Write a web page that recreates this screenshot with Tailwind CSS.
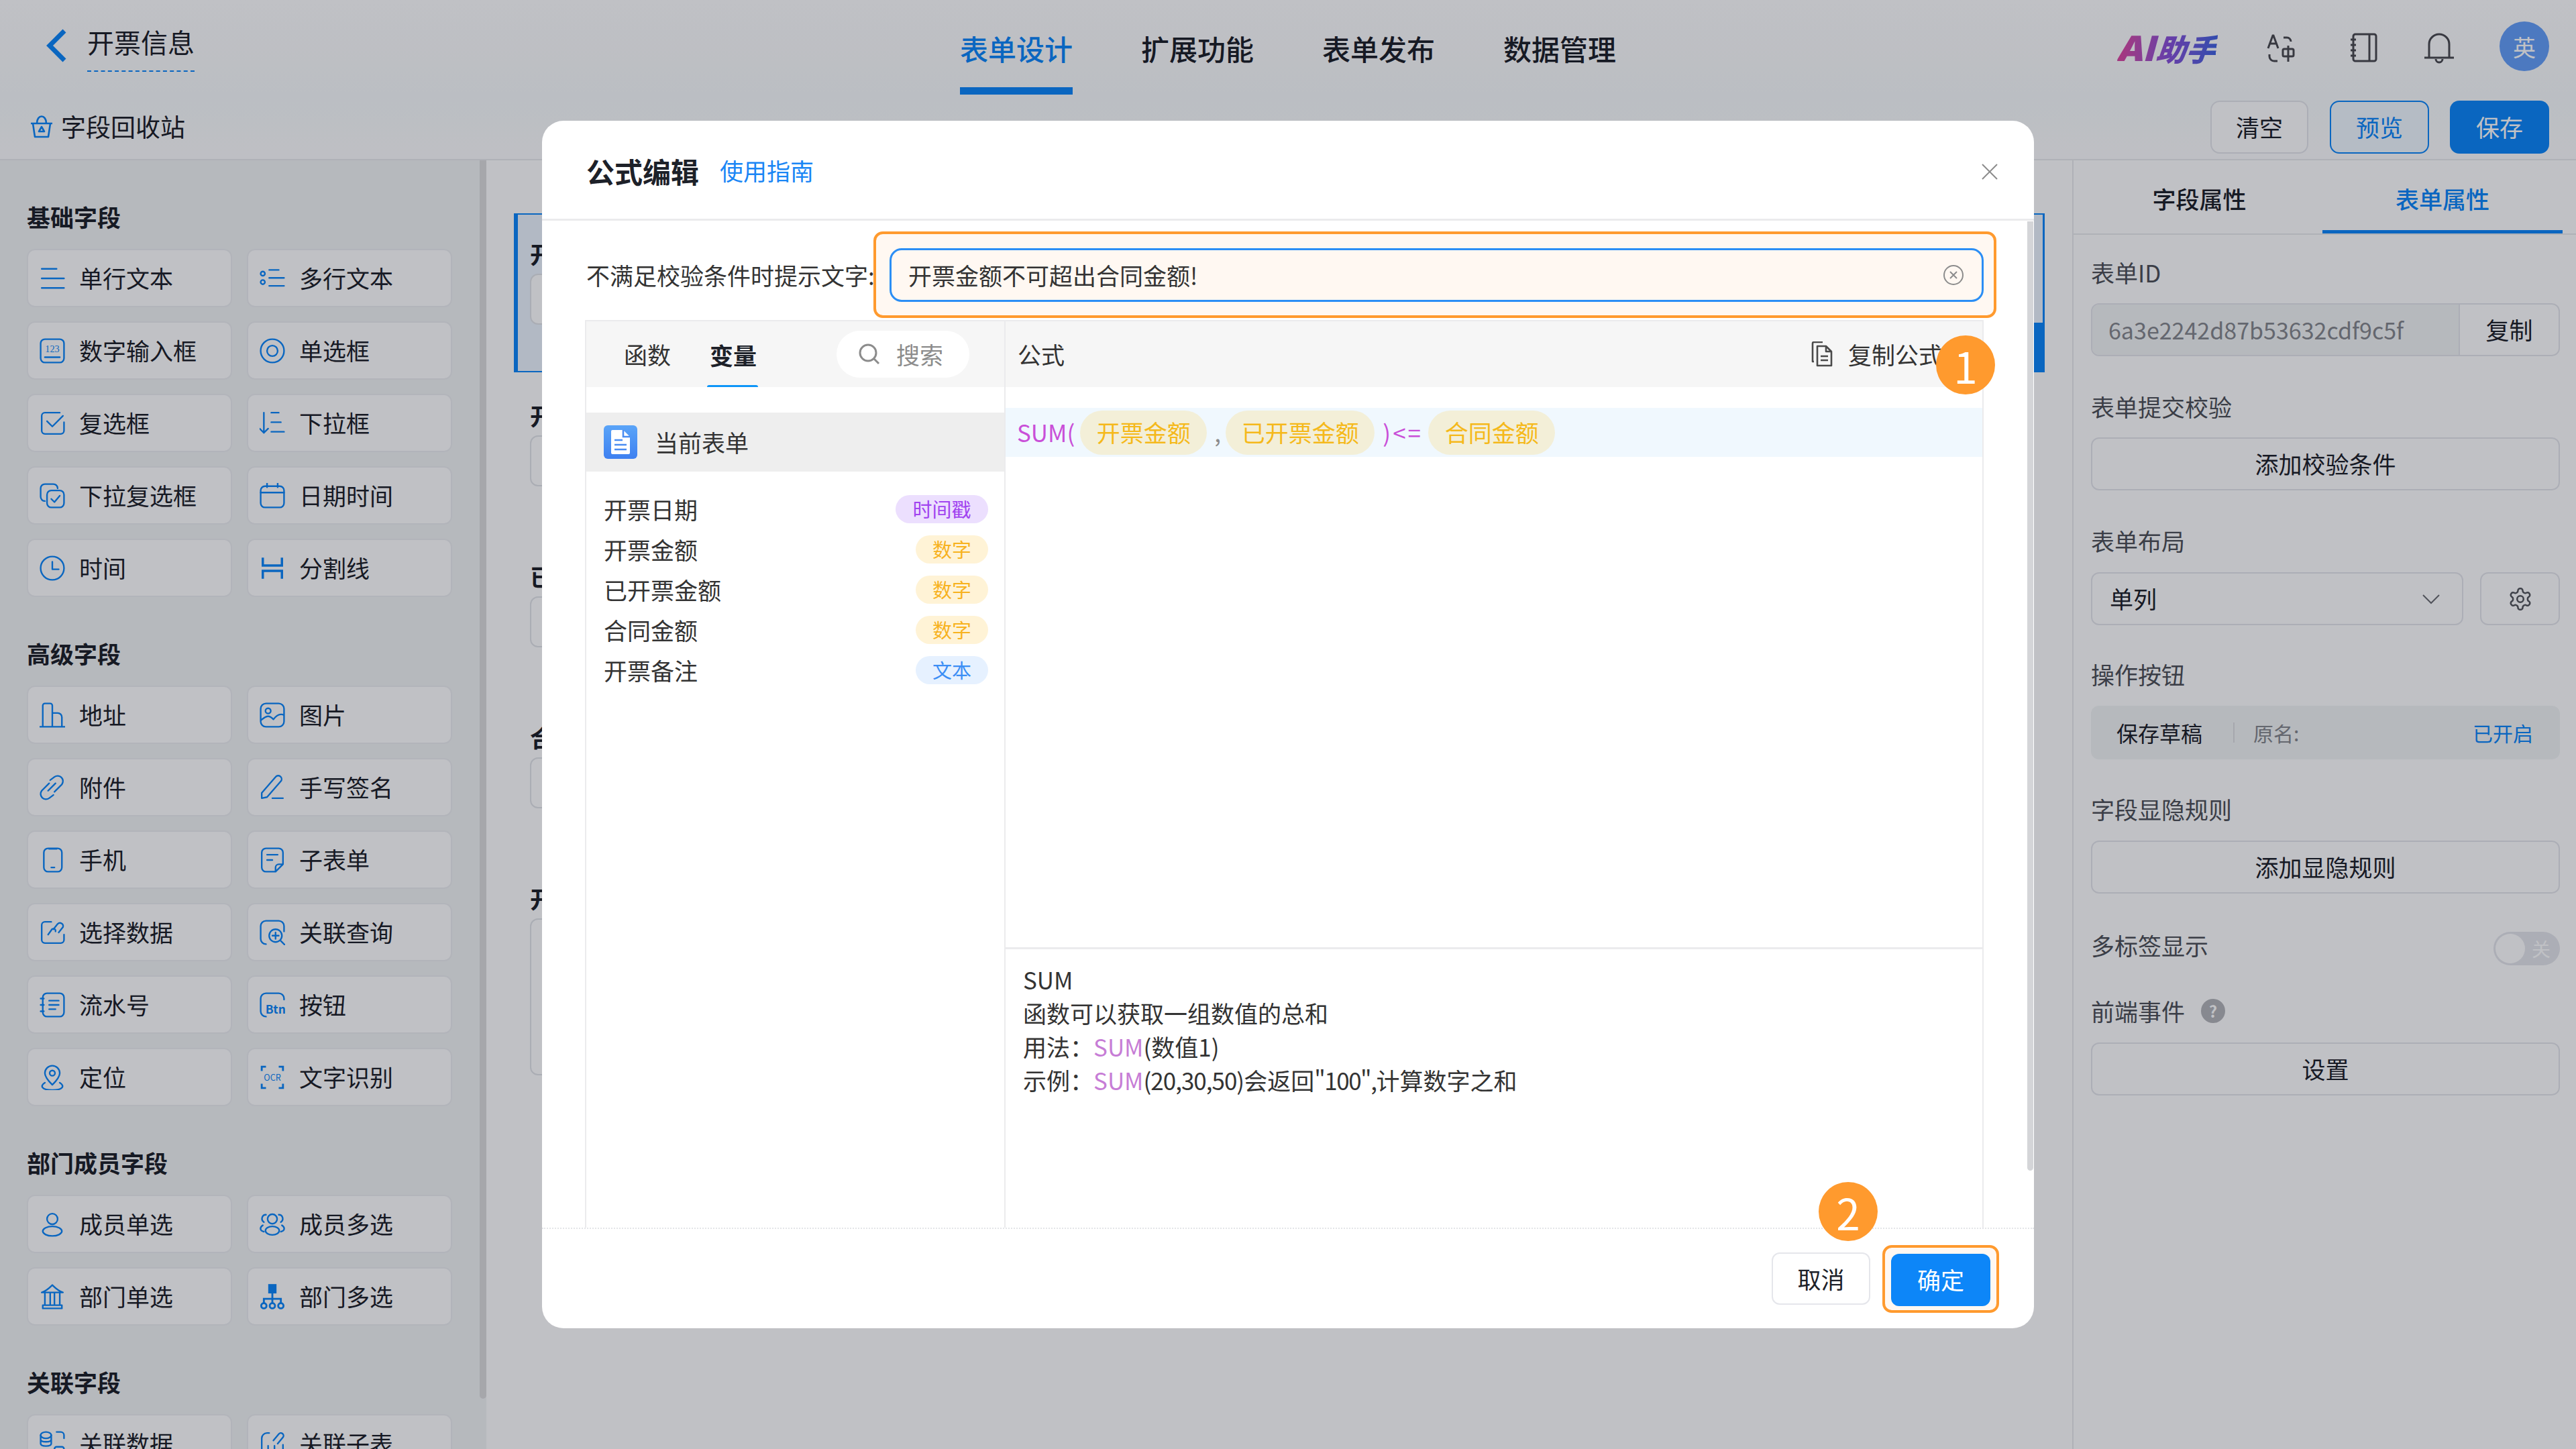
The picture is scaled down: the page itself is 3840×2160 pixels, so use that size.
<!DOCTYPE html>
<html lang="zh-CN">
<head>
  <meta charset="UTF-8" />
  <title>开票信息 - 表单设计</title>
  <script src="https://cdn.jsdelivr.net/npm/@tailwindcss/browser@4"></script>
</head>
<body class="relative h-[2160px] w-[3840px] overflow-hidden bg-white font-['Noto_Sans_CJK_SC','Noto_Sans',sans-serif] text-[35px] text-[#1d2129]">

  <!-- Top header -->
  <header class="flex h-[141px] items-stretch bg-linear-to-b from-white to-[#f9fbfc]">
    <div class="flex w-[1431px] items-start pl-[68px]">
      <svg class="mt-[42px] h-[52px] w-[32px]" viewBox="0 0 32 52" fill="none" stroke="#0d86f8" stroke-width="7"><path d="M28 4 6 26l22 22"/></svg>
      <span class="ml-[30px] mt-[33px] border-b-2 border-dashed border-[#0d86f8] pb-[14px] text-[40px] leading-[58px]">开票信息</span>
    </div>
    <nav class="flex gap-[102px] text-[42px] font-medium">
      <a class="h-full border-b-[11px] border-[#0d86f8] pt-[42px] leading-[60px] text-[#0d86f8]">表单设计</a>
      <a class="h-full pt-[42px] leading-[60px]">扩展功能</a>
      <a class="h-full pt-[42px] leading-[60px]">表单发布</a>
      <a class="h-full pt-[42px] leading-[60px]">数据管理</a>
    </nav>
    <div class="ml-auto flex items-start pr-[40px]">
      <span class="mt-[42px] -skew-x-6 bg-linear-to-r from-[#e0459f] via-[#8a4fd8] to-[#3f63e0] bg-clip-text text-[45px] font-black italic leading-[60px] text-transparent"><span class="font-['Inter'] text-[52px]">AI</span>助手</span>
      <svg class="ml-[74px] mt-[50px] size-[44px]" viewBox="0 0 44 44" fill="none" stroke="#4a4a4f" stroke-width="3"><path d="M3 22 10 3h1l7 19M6 15h10"/><path d="M26 6h5a6 6 0 0 1 6 6"/><path d="M17 41h-5a7 7 0 0 1-7-7v-3"/><rect x="25" y="23" width="16" height="11" rx="2"/><path d="M33 18v24"/></svg>
      <svg class="ml-[80px] mt-[49px] size-[44px]" viewBox="0 0 44 44" fill="none" stroke="#4a4a4f" stroke-width="3"><rect x="6" y="2" width="34" height="40" rx="3"/><path d="M30 2v40"/><path d="M2 10h8M2 18h8M2 26h8M2 34h8"/></svg>
      <svg class="ml-[66px] mt-[47px] size-[48px]" viewBox="0 0 48 48" fill="none" stroke="#4a4a4f" stroke-width="3"><path d="M9 39V19a15 15 0 0 1 30 0v20"/><path d="M2 39h44"/><path d="M19 41a5 5 0 0 0 10 0"/></svg>
      <div class="ml-[66px] mt-[32px] flex size-[74px] items-center justify-center rounded-full bg-[#659ff8] text-[34px] text-white">英</div>
    </div>
  </header>

  <!-- Toolbar -->
  <div class="flex h-[98px] items-center border-b-2 border-[#e9eaec] bg-linear-to-b from-[#f8fbfc] to-[#fdfdfe] pl-[44px] pr-[40px]">
    <svg class="size-[36px]" viewBox="0 0 36 36" fill="none" stroke="#0d86f8" stroke-width="2.6" stroke-linejoin="round"><path d="M2 13h32M5 13l3 20h20l3-20M11 13c0-14 14-14 14 0"/><path d="m18 18-4 7h8z"/></svg>
    <span class="ml-[11px] text-[37px]">字段回收站</span>
    <button class="ml-auto h-[79px] w-[146px] rounded-[14px] border-2 border-[#e5e6eb] bg-white">清空</button>
    <button class="ml-[32px] h-[79px] w-[148px] rounded-[14px] border-2 border-[#0d86f8] bg-[#f0f8ff] text-[#0d86f8]">预览</button>
    <button class="ml-[31px] h-[79px] w-[148px] rounded-[14px] bg-[#0d86f8] text-white">保存</button>
  </div>

  <div class="flex h-[1921px]">
    <!-- Field palette -->
    <aside class="relative w-[725px] shrink-0 overflow-hidden bg-[#f2f4f4] pl-[40px] pt-[60px]">
      <div class="absolute right-0 top-0 h-[1846px] w-[10px] rounded-b-[5px] bg-[#dcdcdd]"></div>

      <h3 class="h-[48px] font-bold leading-[48px]">基础字段</h3>
      <div class="mt-[24px] grid grid-cols-[306px_306px] gap-x-[22px] gap-y-[21px]">
        <button class="flex h-[87px] items-center gap-[21px] rounded-[12px] border-2 border-[#eceef1] bg-white pl-[17px]">
          <svg class="size-[38px]" viewBox="0 0 24 24" fill="none" stroke="#0d86f8" stroke-width="1.5" stroke-linecap="round"><path d="M2 3h14M2 12h21M2 21h21"/></svg>单行文本</button>
        <button class="flex h-[87px] items-center gap-[21px] rounded-[12px] border-2 border-[#eceef1] bg-white pl-[17px]">
          <svg class="size-[38px]" viewBox="0 0 24 24" fill="none" stroke="#0d86f8" stroke-width="1.5" stroke-linecap="round"><circle cx="3" cy="7.5" r="2"/><circle cx="3" cy="15.5" r="2"/><path d="M9 4h9M9 11.5h14M9 19h14"/></svg>多行文本</button>
        <button class="flex h-[87px] items-center gap-[21px] rounded-[12px] border-2 border-[#eceef1] bg-white pl-[17px]">
          <svg class="size-[38px]" viewBox="0 0 24 24" fill="none" stroke="#0d86f8" stroke-width="1.5" stroke-linecap="round"><rect x="1" y="1" width="22" height="22" rx="4"/><path d="M5 18h14"/><text x="12" y="13.5" font-size="9" text-anchor="middle" fill="#0d86f8" stroke="none" font-family="Liberation Serif, serif">123</text></svg>数字输入框</button>
        <button class="flex h-[87px] items-center gap-[21px] rounded-[12px] border-2 border-[#eceef1] bg-white pl-[17px]">
          <svg class="size-[38px]" viewBox="0 0 24 24" fill="none" stroke="#0d86f8" stroke-width="1.5"><circle cx="12" cy="12" r="11"/><circle cx="12" cy="12" r="5"/></svg>单选框</button>
        <button class="flex h-[87px] items-center gap-[21px] rounded-[12px] border-2 border-[#eceef1] bg-white pl-[17px]">
          <svg class="size-[38px]" viewBox="0 0 24 24" fill="none" stroke="#0d86f8" stroke-width="1.5" stroke-linecap="round" stroke-linejoin="round"><path d="M23 11v8a3 3 0 0 1-3 3H5a3 3 0 0 1-3-3V5a3 3 0 0 1 3-3h14"/><path d="m7 10 5 5 10-10"/></svg>复选框</button>
        <button class="flex h-[87px] items-center gap-[21px] rounded-[12px] border-2 border-[#eceef1] bg-white pl-[17px]">
          <svg class="size-[38px]" viewBox="0 0 24 24" fill="none" stroke="#0d86f8" stroke-width="1.5" stroke-linecap="round" stroke-linejoin="round"><path d="M4 2v19M0 17l4 4 4-4M11 2h7M11 11h9M11 20h12"/></svg>下拉框</button>
        <button class="flex h-[87px] items-center gap-[21px] rounded-[12px] border-2 border-[#eceef1] bg-white pl-[17px]">
          <svg class="size-[38px]" viewBox="0 0 24 24" fill="none" stroke="#0d86f8" stroke-width="1.5" stroke-linecap="round" stroke-linejoin="round"><path d="M5 17A4 4 0 0 1 1 13V5a4 4 0 0 1 4-4h8a4 4 0 0 1 4 4"/><rect x="7" y="7" width="16" height="16" rx="4"/><path d="m11 15 3 3 5-6"/></svg>下拉复选框</button>
        <button class="flex h-[87px] items-center gap-[21px] rounded-[12px] border-2 border-[#eceef1] bg-white pl-[17px]">
          <svg class="size-[38px]" viewBox="0 0 24 24" fill="none" stroke="#0d86f8" stroke-width="1.5" stroke-linecap="round"><rect x="1" y="3" width="22" height="20" rx="4"/><path d="M1 9h22M7 0v4M17 0v4"/></svg>日期时间</button>
        <button class="flex h-[87px] items-center gap-[21px] rounded-[12px] border-2 border-[#eceef1] bg-white pl-[17px]">
          <svg class="size-[38px]" viewBox="0 0 24 24" fill="none" stroke="#0d86f8" stroke-width="1.5" stroke-linecap="round" stroke-linejoin="round"><circle cx="12" cy="12" r="11"/><path d="M12 6v7h6"/></svg>时间</button>
        <button class="flex h-[87px] items-center gap-[21px] rounded-[12px] border-2 border-[#eceef1] bg-white pl-[17px]">
          <svg class="size-[38px]" viewBox="0 0 24 24" fill="none" stroke="#0d86f8" stroke-width="2.2"><path d="M3 2v7.500h18V2M3 22v-7.500h18V22"/></svg>分割线</button>
      </div>

      <h3 class="mt-[60px] h-[48px] font-bold leading-[48px]">高级字段</h3>
      <div class="mt-[24px] grid grid-cols-[306px_306px] gap-x-[22px] gap-y-[21px]">
        <button class="flex h-[87px] items-center gap-[21px] rounded-[12px] border-2 border-[#eceef1] bg-white pl-[17px]">
          <svg class="size-[38px]" viewBox="0 0 24 24" fill="none" stroke="#0d86f8" stroke-width="1.5" stroke-linecap="round" stroke-linejoin="round"><path d="M0 23h24M3 23V3a2 2 0 0 1 2-2h5a2 2 0 0 1 2 2v20M12 10h5a4 4 0 0 1 4 4v9"/></svg>地址</button>
        <button class="flex h-[87px] items-center gap-[21px] rounded-[12px] border-2 border-[#eceef1] bg-white pl-[17px]">
          <svg class="size-[38px]" viewBox="0 0 24 24" fill="none" stroke="#0d86f8" stroke-width="1.5" stroke-linejoin="round"><rect x="1" y="1" width="22" height="22" rx="5"/><circle cx="8" cy="8" r="2.5"/><path d="M1 17c6-5 8-5 12-1 3-4 6-6 10-4"/></svg>图片</button>
        <button class="flex h-[87px] items-center gap-[21px] rounded-[12px] border-2 border-[#eceef1] bg-white pl-[17px]">
          <svg class="size-[38px]" viewBox="0 0 24 24" fill="none" stroke="#0d86f8" stroke-width="1.5" stroke-linecap="round"><path d="m15 8-7 7M10 5l4-3a5 5 0 0 1 7 7l-7 7M13 19l-4 3a5 5 0 0 1-7-7l7-7"/></svg>附件</button>
        <button class="flex h-[87px] items-center gap-[21px] rounded-[12px] border-2 border-[#eceef1] bg-white pl-[17px]">
          <svg class="size-[38px]" viewBox="0 0 24 24" fill="none" stroke="#0d86f8" stroke-width="1.5" stroke-linecap="round" stroke-linejoin="round"><path d="M2 17 15 2a3 3 0 0 1 5 4L7 21l-5 1zM12 22h10"/></svg>手写签名</button>
        <button class="flex h-[87px] items-center gap-[21px] rounded-[12px] border-2 border-[#eceef1] bg-white pl-[17px]">
          <svg class="size-[38px]" viewBox="0 0 24 24" fill="none" stroke="#0d86f8" stroke-width="1.5" stroke-linecap="round"><rect x="4" y="1" width="17" height="22" rx="4"/><path d="M9 1.500h7M11 19h3"/></svg>手机</button>
        <button class="flex h-[87px] items-center gap-[21px] rounded-[12px] border-2 border-[#eceef1] bg-white pl-[17px]">
          <svg class="size-[38px]" viewBox="0 0 24 24" fill="none" stroke="#0d86f8" stroke-width="1.5" stroke-linecap="round" stroke-linejoin="round"><path d="M15 23H6a4 4 0 0 1-4-4V5a4 4 0 0 1 4-4h12a4 4 0 0 1 4 4v11zM15 23v-4a3 3 0 0 1 3-3h4M7 7h10M7 12h5"/></svg>子表单</button>
        <button class="flex h-[87px] items-center gap-[21px] rounded-[12px] border-2 border-[#eceef1] bg-white pl-[17px]">
          <svg class="size-[38px]" viewBox="0 0 24 24" fill="none" stroke="#0d86f8" stroke-width="1.5" stroke-linecap="round" stroke-linejoin="round"><path d="M23 14v5a3 3 0 0 1-3 3H5a3 3 0 0 1-3-3V5a3 3 0 0 1 3-3h6"/><path d="m13 9 4-5a3 3 0 0 1 5 3l-4 5M8 14l3-4a2 2 0 0 1 4 1"/></svg>选择数据</button>
        <button class="flex h-[87px] items-center gap-[21px] rounded-[12px] border-2 border-[#eceef1] bg-white pl-[17px]">
          <svg class="size-[38px]" viewBox="0 0 24 24" fill="none" stroke="#0d86f8" stroke-width="1.5" stroke-linecap="round" stroke-linejoin="round"><path d="M6 23a5 5 0 0 1-5-5V6a5 5 0 0 1 5-5h12a5 5 0 0 1 5 5v5"/><circle cx="15" cy="15" r="6"/><path d="m20 20 4 4M15 12v6M12 15h6"/></svg>关联查询</button>
        <button class="flex h-[87px] items-center gap-[21px] rounded-[12px] border-2 border-[#eceef1] bg-white pl-[17px]">
          <svg class="size-[38px]" viewBox="0 0 24 24" fill="none" stroke="#0d86f8" stroke-width="1.5" stroke-linecap="round" stroke-linejoin="round"><rect x="3" y="1" width="20" height="22" rx="4"/><path d="M1 6h3M1 12h3M1 18h3M9 8h9M9 12h9M9 16h6"/></svg>流水号</button>
        <button class="flex h-[87px] items-center gap-[21px] rounded-[12px] border-2 border-[#eceef1] bg-white pl-[17px]">
          <svg class="size-[38px]" viewBox="0 0 24 24" fill="none" stroke="#0d86f8" stroke-width="1.5" stroke-linecap="round"><path d="M6 23a5 5 0 0 1-5-5V6a5 5 0 0 1 5-5h12a5 5 0 0 1 5 5v1"/><text x="15" y="20" font-size="11" font-weight="700" text-anchor="middle" fill="#0d86f8" stroke="none">Btn</text></svg>按钮</button>
        <button class="flex h-[87px] items-center gap-[21px] rounded-[12px] border-2 border-[#eceef1] bg-white pl-[17px]">
          <svg class="size-[38px]" viewBox="0 0 24 24" fill="none" stroke="#0d86f8" stroke-width="1.5" stroke-linecap="round" stroke-linejoin="round"><path d="M12 19C7 14 5 11 5 8a7 7 0 0 1 14 0c0 3-2 6-7 11z"/><circle cx="12" cy="8" r="2.5"/><path d="M5 17c-5 3-3 7 7 7s12-4 7-7"/></svg>定位</button>
        <button class="flex h-[87px] items-center gap-[21px] rounded-[12px] border-2 border-[#eceef1] bg-white pl-[17px]">
          <svg class="size-[38px]" viewBox="0 0 24 24" fill="none" stroke="#0d86f8" stroke-width="1.8"><path d="M6 2H2v4M18 2h4v4M6 22H2v-4M18 22h4v-4"/><text x="12" y="15" font-size="8" text-anchor="middle" fill="#0d86f8" stroke="none">OCR</text></svg>文字识别</button>
      </div>

      <h3 class="mt-[60px] h-[48px] font-bold leading-[48px]">部门成员字段</h3>
      <div class="mt-[24px] grid grid-cols-[306px_306px] gap-x-[22px] gap-y-[21px]">
        <button class="flex h-[87px] items-center gap-[21px] rounded-[12px] border-2 border-[#eceef1] bg-white pl-[17px]">
          <svg class="size-[38px]" viewBox="0 0 24 24" fill="none" stroke="#0d86f8" stroke-width="1.5"><circle cx="12" cy="7" r="5"/><ellipse cx="12" cy="18.500" rx="9" ry="4.500"/></svg>成员单选</button>
        <button class="flex h-[87px] items-center gap-[21px] rounded-[12px] border-2 border-[#eceef1] bg-white pl-[17px]">
          <svg class="size-[38px]" viewBox="0 0 24 24" fill="none" stroke="#0d86f8" stroke-width="1.5" stroke-linecap="round"><circle cx="12" cy="7" r="4.500"/><ellipse cx="12" cy="18" rx="6.500" ry="4"/><path d="M6 3c-4 0-5 5-2 7M18 3c4 0 5 5 2 7M3 13c-3 2-3 5 1 6M21 13c3 2 3 5-1 6"/></svg>成员多选</button>
        <button class="flex h-[87px] items-center gap-[21px] rounded-[12px] border-2 border-[#eceef1] bg-white pl-[17px]">
          <svg class="size-[38px]" viewBox="0 0 24 24" fill="none" stroke="#0d86f8" stroke-width="1.5" stroke-linejoin="round"><path d="M2 8c3-1 7-4 10-7 3 3 7 6 10 7zM3 23h18v-3H3zM5 8v12M10 8v12M14 8v12M19 8v12"/></svg>部门单选</button>
        <button class="flex h-[87px] items-center gap-[21px] rounded-[12px] border-2 border-[#eceef1] bg-white pl-[17px]">
          <svg class="size-[38px]" viewBox="0 0 24 24" fill="none" stroke="#0d86f8" stroke-width="1.8"><path d="M12 8v6M4 18v-4h16v4M12 14v4"/><rect x="9" y="1" width="6" height="7" fill="#0d86f8"/><circle cx="4" cy="20.500" r="2.500"/><circle cx="12" cy="20.500" r="2.500"/><circle cx="20" cy="20.500" r="2.500"/></svg>部门多选</button>
      </div>

      <h3 class="mt-[60px] h-[48px] font-bold leading-[48px]">关联字段</h3>
      <div class="mt-[24px] grid grid-cols-[306px_306px] gap-x-[22px] gap-y-[21px]">
        <button class="flex h-[87px] items-center gap-[21px] rounded-[12px] border-2 border-[#eceef1] bg-white pl-[17px]">
          <svg class="size-[38px]" viewBox="0 0 24 24" fill="none" stroke="#0d86f8" stroke-width="1.5" stroke-linecap="round"><ellipse cx="6" cy="4" rx="5" ry="3"/><path d="M1 4v8c0 3 10 3 10 0V4M1 8c0 3 10 3 10 0M16 1h4a3 3 0 0 1 3 3v3"/><rect x="14" y="15" width="9" height="7" rx="2"/></svg>关联数据</button>
        <button class="flex h-[87px] items-center gap-[21px] rounded-[12px] border-2 border-[#eceef1] bg-white pl-[17px]">
          <svg class="size-[38px]" viewBox="0 0 24 24" fill="none" stroke="#0d86f8" stroke-width="1.5" stroke-linecap="round"><path d="M2 23V7a5 5 0 0 1 5-5h2M22 13v10M8 14v9M14 14v9M13 9l5-6a2.500 2.500 0 0 1 4 3l-5 6"/></svg>关联子表</button>
      </div>
    </aside>

    <!-- Form canvas, mostly hidden by the dialog -->
    <main class="flex-1 overflow-hidden bg-white px-[41px] pt-[79px]">
      <div class="relative mb-[6px] h-[237px] border-y-2 border-l-[6px] border-r-[3px] border-[#0d86f8] bg-[#ecf4fe] pl-[18px]">
        <div class="mt-[34px] h-[48px] font-bold leading-[48px]">开票日期</div>
        <div class="mt-[6px] h-[76px] w-[1800px] rounded-[12px] border-2 border-[#e2e4e8] bg-white"></div>
        <div class="absolute bottom-0 right-0 h-[72px] w-[140px] bg-[#0d86f8]"></div>
      </div>
      <div class="h-[240px] pl-[24px]">
        <div class="h-[82px] pt-[34px] font-bold leading-[48px]">开票金额</div>
        <div class="mt-[6px] h-[76px] w-[1800px] rounded-[12px] border-2 border-[#e2e4e8] bg-white"></div>
      </div>
      <div class="h-[240px] pl-[24px]">
        <div class="h-[82px] pt-[34px] font-bold leading-[48px]">已开票金额</div>
        <div class="mt-[6px] h-[76px] w-[1800px] rounded-[12px] border-2 border-[#e2e4e8] bg-white"></div>
      </div>
      <div class="h-[240px] pl-[24px]">
        <div class="h-[82px] pt-[34px] font-bold leading-[48px]">合同金额</div>
        <div class="mt-[6px] h-[76px] w-[1800px] rounded-[12px] border-2 border-[#e2e4e8] bg-white"></div>
      </div>
      <div class="pl-[24px]">
        <div class="h-[82px] pt-[34px] font-bold leading-[48px]">开票备注</div>
        <div class="mt-[6px] h-[234px] w-[1800px] rounded-[12px] border-2 border-[#e2e4e8] bg-white"></div>
      </div>
    </main>

    <!-- Right property panel -->
    <aside class="w-[751px] shrink-0 border-l-2 border-[#e9eaec] bg-white pl-[26px] pr-[24px]">
      <div class="-ml-[26px] -mr-[24px] flex h-[111px] border-b-2 border-[#e9eaec]">
        <div class="flex w-[371px] items-start justify-center pl-[4px] pt-[32px] font-medium leading-[50px]">字段属性</div>
        <div class="flex h-[109px] w-[358px] items-start justify-center border-b-[5px] border-[#0d86f8] pt-[32px] font-medium leading-[50px] text-[#0d86f8]">表单属性</div>
      </div>

      <div class="mt-[32px] h-[48px] leading-[48px] text-[#4e5157]">表单ID</div>
      <div class="mt-[22px] flex h-[79px] overflow-hidden rounded-[12px] border-2 border-[#e5e6eb]">
        <div class="flex w-[546px] items-center bg-[#f2f4f4] pl-[24px] text-[34px] text-[#85878c]">6a3e2242d87b53632cdf9c5f</div>
        <div class="flex flex-1 items-center justify-center border-l-2 border-[#e5e6eb]">复制</div>
      </div>

      <div class="mt-[51px] h-[48px] leading-[48px] text-[#4e5157]">表单提交校验</div>
      <button class="mt-[22px] h-[79px] w-full rounded-[12px] border-2 border-[#e5e6eb]">添加校验条件</button>

      <div class="mt-[51px] h-[48px] leading-[48px] text-[#4e5157]">表单布局</div>
      <div class="mt-[23px] flex gap-[25px]">
        <div class="flex h-[79px] w-[555px] items-center justify-between rounded-[12px] border-2 border-[#e5e6eb] pl-[26px] pr-[32px]">单列
          <svg class="h-[16px] w-[28px]" viewBox="0 0 28 16" fill="none" stroke="#6b6d72" stroke-width="2"><path d="m2 2 12 12L26 2"/></svg>
        </div>
        <div class="flex h-[79px] flex-1 items-center justify-center rounded-[12px] border-2 border-[#e5e6eb]">
          <svg class="size-[38px]" viewBox="0 0 24 24" fill="none" stroke="#55575c" stroke-width="1.6"><path d="M12.220 2h-.44a2 2 0 0 0-2 2v.18a2 2 0 0 1-1 1.730l-.43.25a2 2 0 0 1-2 0l-.15-.08a2 2 0 0 0-2.730.73l-.22.38a2 2 0 0 0 .73 2.730l.15.1a2 2 0 0 1 1 1.720v.51a2 2 0 0 1-1 1.740l-.15.09a2 2 0 0 0-.73 2.730l.22.38a2 2 0 0 0 2.730.73l.15-.08a2 2 0 0 1 2 0l.43.25a2 2 0 0 1 1 1.730V20a2 2 0 0 0 2 2h.44a2 2 0 0 0 2-2v-.18a2 2 0 0 1 1-1.730l.43-.25a2 2 0 0 1 2 0l.15.08a2 2 0 0 0 2.730-.73l.22-.39a2 2 0 0 0-.73-2.730l-.15-.08a2 2 0 0 1-1-1.740v-.5a2 2 0 0 1 1-1.740l.15-.09a2 2 0 0 0 .73-2.730l-.22-.38a2 2 0 0 0-2.730-.73l-.15.08a2 2 0 0 1-2 0l-.43-.25a2 2 0 0 1-1-1.730V4a2 2 0 0 0-2-2z"/><circle cx="12" cy="12" r="3"/></svg>
        </div>
      </div>

      <div class="mt-[49px] h-[48px] leading-[48px] text-[#4e5157]">操作按钮</div>
      <div class="mt-[23px] flex h-[80px] items-center rounded-[12px] bg-[#f2f4f4] pl-[38px] pr-[40px] text-[32px]">
        <span>保存草稿</span>
        <span class="ml-[46px] h-[30px] w-[2px] bg-[#dcdde0]"></span>
        <span class="ml-[28px] text-[30px] text-[#85878c]">原名:</span>
        <span class="ml-auto text-[30px] text-[#0d86f8]">已开启</span>
      </div>

      <div class="mt-[50px] h-[48px] leading-[48px] text-[#4e5157]">字段显隐规则</div>
      <button class="mt-[23px] h-[79px] w-full rounded-[12px] border-2 border-[#e5e6eb]">添加显隐规则</button>

      <div class="mt-[53px] flex h-[48px] items-center justify-between leading-[48px] text-[#4e5157]">多标签显示
        <div class="relative top-[5px] h-[50px] w-[99px] rounded-full bg-[#e5e6eb]">
          <div class="absolute left-[3px] top-[3px] size-[44px] rounded-full bg-white"></div>
          <span class="absolute right-[14px] top-0 text-[28px] leading-[50px] text-white">关</span>
        </div>
      </div>

      <div class="mt-[50px] flex h-[48px] items-center gap-[24px] leading-[48px] text-[#4e5157]">前端事件
        <span class="flex size-[36px] items-center justify-center rounded-full bg-[#b3b4b8] text-[24px] font-bold text-white">?</span>
      </div>
      <button class="mt-[23px] h-[79px] w-full rounded-[12px] border-2 border-[#e5e6eb]">设置</button>
    </aside>
  </div>

  <!-- Dim layer under the dialog -->
  <div class="absolute inset-0 z-10 bg-[#03071740]"></div>

  <!-- Formula dialog -->
  <section class="absolute left-[808px] top-[180px] z-20 flex h-[1800px] w-[2224px] flex-col overflow-hidden rounded-[32px] bg-white">
    <div class="flex h-[149px] shrink-0 items-center border-b-[3px] border-[#ebebed] pl-[66px] pr-[54px] pt-[3px]">
      <h2 class="text-[42px] font-bold">公式编辑</h2>
      <a class="ml-[31px] text-[35px] text-[#1a86f5]">使用指南</a>
      <svg class="ml-auto mt-[2px] size-[24px]" viewBox="0 0 24 24" fill="none" stroke="#8c8c8c" stroke-width="2"><path d="m1 1 22 22M23 1 1 23"/></svg>
    </div>

    <!-- Tip text row -->
    <div class="mt-[16px] flex h-[129px] shrink-0 items-center pl-[66px]">
      <label class="w-[428px] shrink-0 whitespace-nowrap pt-[2px] text-[#333]">不满足校验条件时提示文字:</label>
      <div class="h-[129px] w-[1674px] shrink-0 rounded-[14px] border-4 border-[#ff9a2e] bg-[#fff8f2] pb-[20px] pl-[20px] pr-[15px] pt-[21px]">
        <div class="flex h-[80px] items-center justify-between rounded-[18px] border-[3px] border-[#2b8ef5] pl-[25px] pr-[26px] text-[#333]">
          开票金额不可超出合同金额!
          <svg class="size-[32px]" viewBox="0 0 32 32" fill="none" stroke="#8c8c8c" stroke-width="2"><circle cx="16" cy="16" r="14"/><path d="m11 11 10 10M21 11 11 21"/></svg>
        </div>
      </div>
    </div>

    <!-- Editor -->
    <div class="ml-[64px] mt-[3px] flex w-[2085px] flex-1 border-x-2 border-t-2 border-[#ebebed]">
      <div class="w-[625px] shrink-0 border-r-2 border-[#ebebed]">
        <div class="relative flex h-[98px] items-center bg-[#f6f6f6] pl-[56px]">
          <span class="text-[#333]">函数</span>
          <span class="relative ml-[58px] h-full pt-[24px] font-bold">变量
            <span class="absolute bottom-0 -left-[4px] h-[3px] w-[76px] rounded-t bg-[#0d95f8]"></span>
          </span>
          <div class="ml-[119px] flex h-[70px] w-[198px] items-center rounded-full bg-white pl-[32px] text-[#8c8c8c]">
            <svg class="size-[34px]" viewBox="0 0 34 34" fill="none" stroke="#8c8c8c" stroke-width="3"><circle cx="15" cy="15" r="12"/><path d="m24 24 7 7"/></svg>
            <span class="ml-[23px]">搜索</span>
          </div>
        </div>
        <div class="mt-[38px] flex h-[88px] items-center bg-[#eeeeee] pl-[26px]">
          <span class="flex h-[50px] w-[50px] items-center justify-center rounded-[6px] bg-linear-to-b from-[#5aa4f8] to-[#3f80f0]">
            <svg class="h-[36px] w-[28px]" viewBox="0 0 28 36"><path d="M2 0h16l10 10v24a2 2 0 0 1-2 2H2a2 2 0 0 1-2-2V2a2 2 0 0 1 2-2z" fill="#fff"/><path d="M18 0v10h10M5 15h12M5 22h18M5 29h18" fill="none" stroke="#4a8cf2" stroke-width="2.600"/></svg>
          </span>
          <span class="ml-[26px] text-[#333]">当前表单</span>
        </div>
        <ul class="mt-[26px] pl-[26px] pr-[24px] text-[#333]">
          <li class="flex h-[60px] items-center justify-between">开票日期<span class="flex h-[42px] w-[138px] items-center justify-center rounded-full bg-[#ecdffe] text-[29px] text-[#a144f0]">时间戳</span></li>
          <li class="flex h-[60px] items-center justify-between">开票金额<span class="flex h-[42px] w-[108px] items-center justify-center rounded-full bg-[#fff3d6] text-[29px] text-[#f7b21f]">数字</span></li>
          <li class="flex h-[60px] items-center justify-between">已开票金额<span class="flex h-[42px] w-[108px] items-center justify-center rounded-full bg-[#fff3d6] text-[29px] text-[#f7b21f]">数字</span></li>
          <li class="flex h-[60px] items-center justify-between">合同金额<span class="flex h-[42px] w-[108px] items-center justify-center rounded-full bg-[#fff3d6] text-[29px] text-[#f7b21f]">数字</span></li>
          <li class="flex h-[60px] items-center justify-between">开票备注<span class="flex h-[42px] w-[108px] items-center justify-center rounded-full bg-[#e6f1ff] text-[29px] text-[#3b8ef5]">文本</span></li>
        </ul>
      </div>

      <div class="flex flex-1 flex-col">
        <div class="flex h-[98px] shrink-0 items-center bg-[#f6f6f6] pl-[18px] text-[#333]">
          <span>公式</span>
          <svg class="ml-[1112px] h-[38px] w-[34px]" viewBox="0 0 34 38" fill="none" stroke="#4a4a4a" stroke-width="2.600" stroke-linejoin="round"><path d="M5 30H3V3a2 2 0 0 1 2-2h13M10 7h13l8 8v21H10zM23 7v8h8M15 22h11M15 28h11"/></svg>
          <span class="ml-[22px]">复制公式</span>
        </div>
        <div class="mt-[31px] flex h-[73px] shrink-0 items-center bg-[#f0f8fe] pl-[17px] text-[#c94fd8]">
          <span>SUM(</span>
          <span class="ml-[8px] flex h-[66px] w-[189px] items-center justify-center rounded-full bg-[#f3efd8] text-[#f5b91b]">开票金额</span>
          <span class="ml-[11px] w-[17px] text-[#8c8c8c]">,</span>
          <span class="flex h-[66px] w-[222px] items-center justify-center rounded-full bg-[#f3efd8] text-[#f5b91b]">已开票金额</span>
          <span class="ml-[12px] w-[68px] tracking-[3px]">)&lt;=</span>
          <span class="flex h-[66px] w-[189px] items-center justify-center rounded-full bg-[#f3efd8] text-[#f5b91b]">合同金额</span>
        </div>
        <div class="flex-1"></div>
        <div class="h-[418px] shrink-0 border-t-[3px] border-[#ebebed] pl-[26px] pt-[20px] leading-[50px] text-[#333]">
          <p>SUM</p>
          <p>函数可以获取一组数值的总和</p>
          <p>用法：<span class="text-[#c77dd6]">SUM</span>(数值1)</p>
          <p>示例：<span class="text-[#c77dd6]">SUM</span><span class="tracking-[-1px]">(20,30,50)</span>会返回<span class="tracking-[-1.500px]">"100",</span>计算数字之和</p>
        </div>
      </div>
    </div>

    <!-- Footer -->
    <div class="flex h-[150px] shrink-0 items-center justify-end gap-[18px] border-t-2 border-dotted border-[#e3e4e8] pr-[52px]">
      <button class="h-[78px] w-[147px] rounded-[12px] border-2 border-[#e5e6eb] bg-white">取消</button>
      <div class="h-[101px] w-[174px] rounded-[14px] border-4 border-[#ff9a2e] bg-[#fff8f2] pl-[9px] pt-[9px]">
        <button class="h-[78px] w-[148px] rounded-[12px] bg-[#0d86f8] text-white">确定</button>
      </div>
    </div>

    <!-- Faint scroll thumb -->
    <div class="absolute right-[1px] top-[150px] h-[1415px] w-[9px] rounded-b-[5px] bg-[#d4d5d8]"></div>

    <!-- Step markers -->
    <div class="absolute left-[2078px] top-[320px] flex size-[88px] items-center justify-center rounded-full bg-[#ff9a2e] text-[64px] leading-none text-white">1</div>
    <div class="absolute left-[1903px] top-[1582px] flex size-[88px] items-center justify-center rounded-full bg-[#ff9a2e] text-[64px] leading-none text-white">2</div>
  </section>
</body>
</html>
